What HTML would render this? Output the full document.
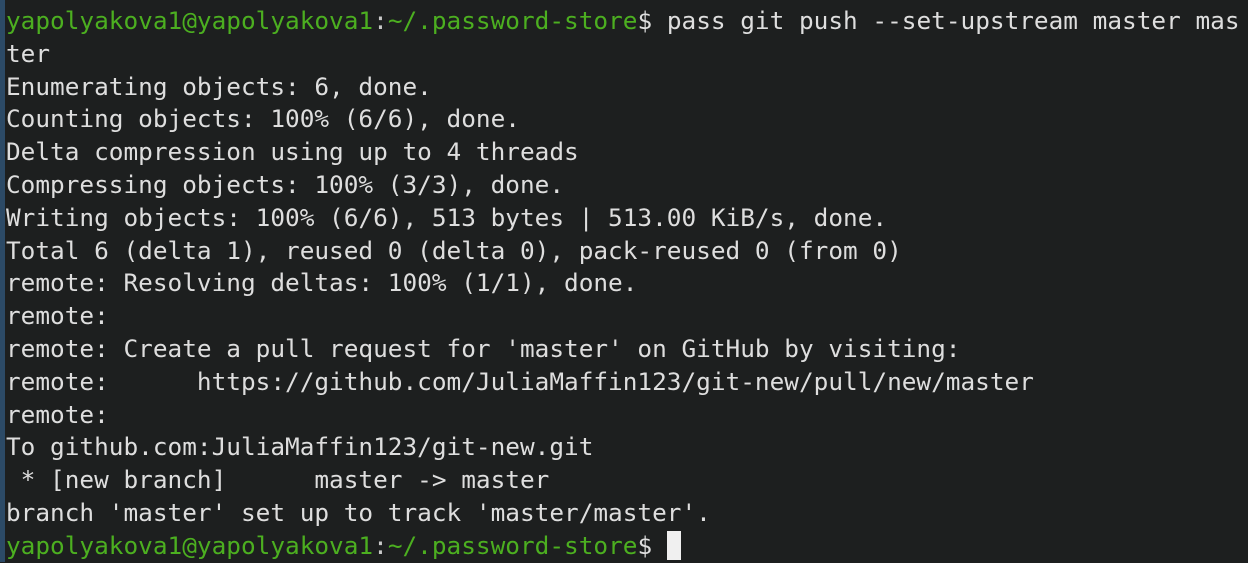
<!DOCTYPE html><html><head><style>
html,body{margin:0;padding:0;width:1248px;height:562px;overflow:hidden;background:#1d1f1f}
.edge{position:absolute;left:0;top:0;width:5px;height:562px;background:#2c4a66}
pre{position:absolute;left:6px;top:5px;margin:0;font-family:"DejaVu Sans Mono","Liberation Mono",monospace;font-size:24.4px;line-height:32.8px;color:#dedede;letter-spacing:0;white-space:pre}
.g{color:#4caf20}.c{color:#c8c8c8}
.cur{display:inline-block;width:14px;height:29px;background:#f0f0f0;vertical-align:-6px}
</style></head><body><div class="edge"></div><pre><span class="g">yapolyakova1@yapolyakova1</span><span class="c">:</span><span class="g">~/.password-store</span>$ pass git push --set-upstream master mas
ter
Enumerating objects: 6, done.
Counting objects: 100% (6/6), done.
Delta compression using up to 4 threads
Compressing objects: 100% (3/3), done.
Writing objects: 100% (6/6), 513 bytes | 513.00 KiB/s, done.
Total 6 (delta 1), reused 0 (delta 0), pack-reused 0 (from 0)
remote: Resolving deltas: 100% (1/1), done.
remote:
remote: Create a pull request for 'master' on GitHub by visiting:
remote:      https://github.com/JuliaMaffin123/git-new/pull/new/master
remote:
To github.com:JuliaMaffin123/git-new.git
 * [new branch]      master -> master
branch 'master' set up to track 'master/master'.
<span class="g">yapolyakova1@yapolyakova1</span><span class="c">:</span><span class="g">~/.password-store</span>$ <span class="cur"></span></pre></body></html>
